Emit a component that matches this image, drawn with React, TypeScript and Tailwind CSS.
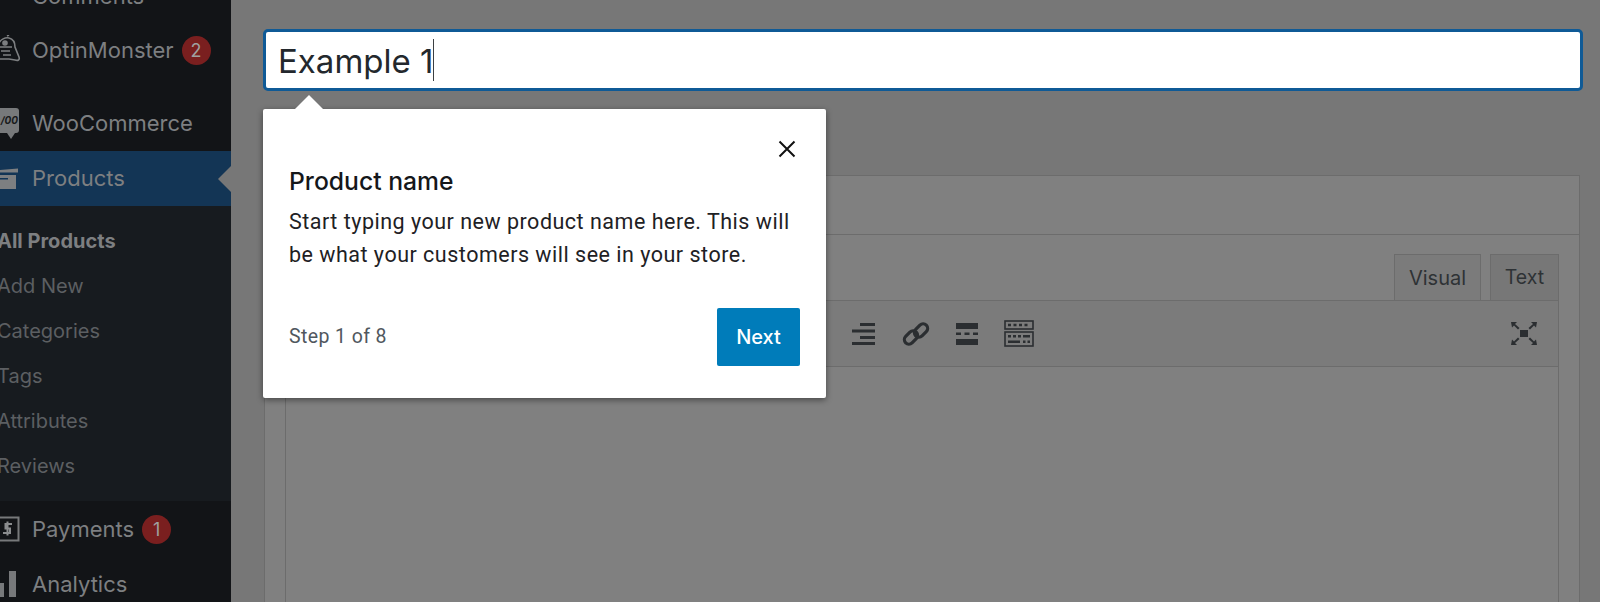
import React from "react";

const font = { fontFamily: "Inter, Roboto, sans-serif" };

function MonsterIcon() {
  return (
    <svg width="22" height="30" viewBox="0 0 22 30" fill="none" stroke="#7d7f81" strokeWidth="1.6" className="shrink-0">
      <path d="M-2 10c2-6 8-8 11-7 4 1 6 5 6 9l4 10c1 3-1 4-4 3l-6-1H-2" />
      <path d="M-2 12h14M1 16h9M3 20h8M7 1l2-1" />
      <circle cx="5" cy="8" r="2" fill="#7d7f81" />
    </svg>
  );
}

function WooIcon() {
  return (
    <div className="relative w-[19px] h-[31px] shrink-0">
      <div className="w-[19px] h-[25px] bg-[#77797b] rounded-r-[3px] flex items-center justify-end pr-[1px] overflow-hidden">
        <span className="text-[10px] italic font-bold text-[#17191c] leading-none">/00</span>
      </div>
      <div className="absolute left-[7px] bottom-0 w-0 h-0 border-l-[4px] border-r-[4px] border-t-[6px] border-l-transparent border-r-transparent border-t-[#77797b]" />
    </div>
  );
}

function BoxIcon() {
  return (
    <svg width="18" height="22" viewBox="0 0 18 22" className="shrink-0">
      <path d="M0 2L18 0.500V4.500H0Z" fill="#7d7f81" />
      <path d="M0 7H16V21H0ZM0 10V11.500H8V10Z" fill="#7d7f81" fillRule="evenodd" />
    </svg>
  );
}

function DollarIcon() {
  return (
    <svg width="20" height="26" viewBox="0 0 20 26" className="shrink-0">
      <path d="M0 1.500H18.500V24.500H0" fill="none" stroke="#77797b" strokeWidth="2" />
      <path d="M12 8H5.500V12.500H10V17H3M7.500 5.500V19.500" fill="none" stroke="#8a8c8e" strokeWidth="2" />
    </svg>
  );
}

function BarsIcon() {
  return (
    <svg width="16" height="26" viewBox="0 0 16 26" className="shrink-0">
      <rect x="-2" y="12" width="6" height="14" fill="#77797b" />
      <rect x="9" y="0" width="7" height="26" fill="#77797b" />
    </svg>
  );
}

function Badge({ n }: { n: number }) {
  return (
    <span className="ml-[8px] w-[29px] h-[29px] rounded-full bg-[#7a1f1f] text-[#a0a0a0] text-[18px] flex items-center justify-center">
      {n}
    </span>
  );
}

function MenuItem({ icon, label, badge, h, active }: { icon: React.ReactNode; label: string; badge?: number; h: string; active?: boolean }) {
  return (
    <div className={`relative flex items-center ${h} ${active ? "bg-[#133555]" : ""}`}>
      <div className="w-[32px] flex items-center">{icon}</div>
      <span className="text-[22px] text-[#7d7f81] whitespace-nowrap">{label}</span>
      {badge ? <Badge n={badge} /> : null}
      {active ? (
        <div className="absolute right-0 top-[15px] w-0 h-0 border-y-[13px] border-r-[13px] border-y-transparent border-r-[#777777]" />
      ) : null}
    </div>
  );
}

function Sidebar() {
  const sub = ["Add New", "Categories", "Tags", "Attributes", "Reviews"];
  return (
    <aside className="w-[231px] shrink-0 h-[602px] overflow-hidden bg-[#121417]">
      <div className="-mt-[25px] h-[42px] flex items-center">
        <div className="w-[32px]" />
        <span className="text-[22px] text-[#7d7f81]">Comments</span>
      </div>
      <div className="mt-[12px]">
        <MenuItem icon={<MonsterIcon />} label="OptinMonster" badge={2} h="h-[42px]" />
      </div>
      <div className="mt-[31px]">
        <MenuItem icon={<WooIcon />} label="WooCommerce" h="h-[42px]" />
      </div>
      <div className="mt-[7px]">
        <MenuItem icon={<BoxIcon />} label="Products" h="h-[55px]" active />
      </div>
      <div className="bg-[#171b1f] h-[295px] pt-[12px] -ml-[3px]">
        <div className="h-[45px] flex items-center text-[20px] font-bold text-[#7d7f81]">All Products</div>
        {sub.map((s) => (
          <div key={s} className="h-[45px] flex items-center text-[20px] text-[#5c5f62]">
            {s}
          </div>
        ))}
      </div>
      <div className="mt-[7px]">
        <MenuItem icon={<DollarIcon />} label="Payments" badge={1} h="h-[42px]" />
      </div>
      <div className="mt-[13px]">
        <MenuItem icon={<BarsIcon />} label="Analytics" h="h-[42px]" />
      </div>
    </aside>
  );
}

function ToolbarIcons() {
  return (
    <div className="flex items-center ml-[566px]">
      <svg width="24" height="22" viewBox="0 0 24 22" className="text-[#2b2e31]" fill="currentColor">
        <rect x="8" y="0" width="15" height="3" />
        <rect x="0" y="6.500" width="23" height="3" />
        <rect x="8" y="13" width="15" height="3" />
        <rect x="0" y="19" width="23" height="3" />
      </svg>
      <svg width="28" height="28" viewBox="0 0 28 28" fill="none" stroke="#2b2e31" strokeWidth="3.200" className="ml-[26px]">
        <rect x="1.500" y="13" width="15" height="9" rx="4.500" transform="rotate(-45 9 17.500)" />
        <rect x="11.500" y="6" width="15" height="9" rx="4.500" transform="rotate(-45 19 10.500)" />
      </svg>
      <svg width="23" height="22" viewBox="0 0 23 22" fill="#2b2e31" className="ml-[26px]">
        <rect x="0" y="0" width="22" height="6" />
        <rect x="0" y="9.500" width="5" height="2.500" />
        <rect x="8.500" y="9.500" width="5" height="2.500" />
        <rect x="17" y="9.500" width="5" height="2.500" />
        <rect x="0" y="16" width="22" height="6" />
      </svg>
      <svg width="30" height="27" viewBox="0 0 30 27" className="ml-[25px]">
        <rect x="1" y="1" width="28" height="8" fill="none" stroke="#2b2e31" strokeWidth="1.600" />
        <path d="M4 3.800h3v2.500H4zM9.500 3.800h3v2.500h-3zM15 3.800h3v2.500h-3zM20.500 3.800h3v2.500h-3z" fill="#2b2e31" />
        <rect x="1" y="12" width="28" height="14" fill="none" stroke="#2b2e31" strokeWidth="1.600" />
        <path d="M4 15h3v2.500H4zM9 15h3v2.500H9zM14 15h3v2.500h-3zM19 15h7v2.500h-7zM4 20.500h12V23H4zM19 20.500h2.500V23H19zM23.500 20.500H26V23h-2.500z" fill="#2b2e31" />
      </svg>
    </div>
  );
}

function FullscreenIcon() {
  return (
    <svg width="26" height="23" viewBox="0 0 26 23" fill="#2b2e31" stroke="none">
      <rect x="9" y="8" width="8" height="7" />
      <path d="M0 0h6l-2 2 4.500 4-1.500 1.500L3 3.500 1 5.500zM26 0h-6l2 2-4.500 4 1.500 1.500 4-4 2 2zM0 23h6l-2-2 4.500-4-1.500-1.500-4 4-2-2zM26 23h-6l2-2-4.500-4 1.500-1.500 4 4 2-2z" />
    </svg>
  );
}

function Popover() {
  return (
    <div className="absolute left-[32px] top-[109px] w-[563px] h-[289px] bg-white rounded-[2px] shadow-[0_2px_6px_rgba(0,0,0,0.45)] px-[26px]">
      <div className="absolute left-[32px] -top-[14px] w-0 h-0 border-x-[14px] border-b-[14px] border-x-transparent border-b-white" />
      <svg width="18" height="18" viewBox="0 0 18 18" stroke="#111" strokeWidth="2" className="absolute right-[30px] top-[31px]">
        <path d="M1.500 1.500l15 15M16.500 1.500l-15 15" />
      </svg>
      <h2 className="pt-[56px] text-[24.7px] leading-[32px] font-medium text-[#15171a]">Product name</h2>
      <p className="mt-[8px] font-['Roboto',sans-serif] text-[21.5px] tracking-[0.5px] leading-[33px] text-[#1e2124]">
        Start typing your new product name here. This will
        <br />
        be what your customers will see in your store.
      </p>
      <div className="mt-[37px] flex items-center justify-between">
        <span className="font-['Roboto',sans-serif] text-[19.5px] tracking-[0.4px] text-[#50575e]">Step 1 of 8</span>
        <button className="w-[83px] h-[58px] bg-[#007cba] rounded-[2px] text-white text-[20px] font-medium">Next</button>
      </div>
    </div>
  );
}

export default function App() {
  return (
    <div className="flex w-[1600px] h-[602px] overflow-hidden bg-[#777777]" style={font}>
      <Sidebar />
      <main className="relative flex-1 pl-[32px] pr-[17px] pt-[29px]">
        <div className="h-[62px] bg-white border-[3px] border-[#0f5a96] rounded-[5px] flex items-center pl-[12px]">
          <span className="text-[33px] text-[#23282d] leading-none pt-[3px]">Example 1</span>
          <span className="w-[1px] h-[42px] bg-[#3c4043]" />
        </div>
        <section className="mt-[84px] ml-[1px] mr-[3px] h-[500px] border border-[#6c6c6c] bg-[#808080]">
          <div className="h-[59px] border-b border-[#6c6c6c]" />
          <div className="pl-[20px] pr-[20px] pt-[19px]">
            <div className="flex justify-end h-[46px]">
              <div className="w-[87px] h-[46px] -mb-[1px] border border-[#6c6c6c] border-b-0 bg-[#7b7b7b] flex items-center justify-center text-[20px] text-[#2e3235] relative z-10">
                Visual
              </div>
              <div className="ml-[9px] w-[69px] h-[46px] border border-[#6c6c6c] border-b-0 bg-[#777777] flex items-center justify-center text-[19.5px] text-[#2e3235]">
                Text
              </div>
            </div>
            <div className="h-[67px] border border-[#6c6c6c] bg-[#7b7b7b] flex items-center justify-between pr-[21px]">
              <ToolbarIcons />
              <FullscreenIcon />
            </div>
            <div className="h-[300px] border-x border-[#6c6c6c]" />
          </div>
        </section>
        <Popover />
      </main>
    </div>
  );
}
